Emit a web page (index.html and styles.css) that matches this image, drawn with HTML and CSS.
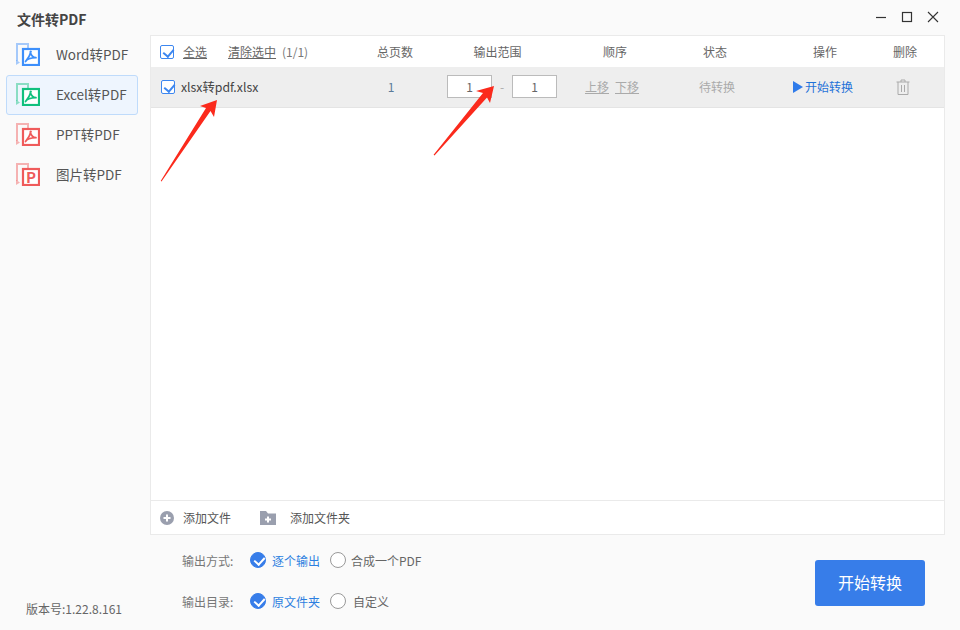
FILE: index.html
```html
<!DOCTYPE html>
<html lang="zh-CN">
<head>
  <meta charset="UTF-8">
  <title>文件转PDF</title>
  <link rel="stylesheet" href="styles.css">
</head>
<body>
  <svg class="defs" width="0" height="0">
    <symbol id="doc" viewBox="0 0 24 23">
      <path d="M1 18V1h11v4" fill="none" stroke="currentColor" stroke-opacity=".45" stroke-width="2"/>
      <path d="M0 17l4 2.500L0 22z" fill="currentColor" fill-opacity=".45"/>
      <rect x="7" y="6" width="16" height="16" fill="#fff" stroke="currentColor" stroke-width="2.200"/>
    </symbol>
    <symbol id="swirl" viewBox="0 0 24 23">
      <path d="M15 8.500c-.8 3-2.800 7-5.500 10 1-1.800 4-3.500 10.500-3.800-3.200-.2-5-3-5.700-5.500-.2-.8.5-1 .7-.7z" fill="none" stroke="currentColor" stroke-width="1.700" stroke-linejoin="round"/>
    </symbol>
  </svg>

  <header class="titlebar">
    <h1 class="app-title">文件转PDF</h1>
    <div class="win-btns">
      <svg width="12" height="12" viewBox="0 0 12 12"><path d="M1 6.500h10" stroke="#333" stroke-width="1.200"/></svg>
      <svg width="12" height="12" viewBox="0 0 12 12"><rect x="1.500" y="1.500" width="9" height="9" fill="none" stroke="#333" stroke-width="1.200"/></svg>
      <svg width="12" height="12" viewBox="0 0 12 12"><path d="M1 1l10 10M11 1L1 11" stroke="#333" stroke-width="1.100"/></svg>
    </div>
  </header>

  <div class="main">
    <aside class="sidebar">
      <nav class="menu">
        <a class="menu-item blue">
          <svg class="menu-icon"><use href="#doc"/><use href="#swirl"/></svg>
          <span>Word转PDF</span>
        </a>
        <a class="menu-item green active">
          <svg class="menu-icon"><use href="#doc"/><use href="#swirl"/></svg>
          <span>Excel转PDF</span>
        </a>
        <a class="menu-item red">
          <svg class="menu-icon"><use href="#doc"/><use href="#swirl"/></svg>
          <span>PPT转PDF</span>
        </a>
        <a class="menu-item red">
          <svg class="menu-icon"><use href="#doc"/><text x="15" y="19.500" class="p-mark">P</text></svg>
          <span>图片转PDF</span>
        </a>
      </nav>
      <div class="version">版本号:1.22.8.161</div>
    </aside>

    <section class="content">
      <div class="panel">
        <div class="grid-row head">
          <div class="name-cell">
            <span class="check"></span>
            <a class="link select-all">全选</a>
            <a class="link">清除选中</a>
            <span class="count">(1/1)</span>
          </div>
          <div>总页数</div>
          <div>输出范围</div>
          <div>顺序</div>
          <div>状态</div>
          <div>操作</div>
          <div>删除</div>
        </div>

        <div class="grid-row file">
          <div class="name-cell">
            <span class="check"></span>
            <span class="file-name">xlsx转pdf.xlsx</span>
          </div>
          <div class="pages">1</div>
          <div class="range">
            <span class="num">1</span>
            <span class="dash">-</span>
            <span class="num">1</span>
          </div>
          <div class="order"><a>上移</a><a>下移</a></div>
          <div class="status">待转换</div>
          <div class="action">
            <svg width="10" height="12" viewBox="0 0 10 12"><path d="M0 0l10 6-10 6z" fill="#2f7bea"/></svg>
            <span>开始转换</span>
          </div>
          <div class="trash">
            <svg width="14" height="16" viewBox="0 0 14 16" fill="none" stroke="#aaa" stroke-width="1">
              <path d="M.5 3h13M5 3V1h4v2M2 3v12.500h10V3M5.500 6v7M8.500 6v7"/>
            </svg>
          </div>
        </div>

        <div class="list-space"></div>

        <div class="panel-foot">
          <a class="add-btn">
            <svg width="14" height="14" viewBox="0 0 14 14"><circle cx="7" cy="7" r="7" fill="#9a9fae"/><path d="M7 3.500v7M3.500 7h7" stroke="#fff" stroke-width="2"/></svg>
            <span>添加文件</span>
          </a>
          <a class="add-btn folder">
            <svg width="16" height="14" viewBox="0 0 16 14"><path d="M0 0h6l2 2.500h8V14H0z" fill="#9a9fae"/><path d="M8 5.500v6M5 8.500h6" stroke="#fff" stroke-width="2"/></svg>
            <span>添加文件夹</span>
          </a>
        </div>
      </div>

      <div class="bottom">
        <div class="options">
          <div class="opt-row">
            <span class="opt-label">输出方式:</span>
            <span class="radio on"></span>
            <span class="opt-text on">逐个输出</span>
            <span class="radio"></span>
            <span class="opt-text">合成一个PDF</span>
          </div>
          <div class="opt-row">
            <span class="opt-label">输出目录:</span>
            <span class="radio on"></span>
            <span class="opt-text on">原文件夹</span>
            <span class="radio"></span>
            <span class="opt-text custom">自定义</span>
          </div>
        </div>
        <button class="start-btn">开始转换</button>
      </div>
    </section>
  </div>

  <!-- red arrows drawn over the file row -->
  <svg class="arrows" width="960" height="630" viewBox="0 0 960 630">
    <path d="M217 100l-3 17-3.500-6-49 70.500-.8-.6 45.300-73-6-2z" fill="#fb2a1c"/>
    <path d="M494 86l-4 17-3-5.500-52.500 58-.9-.7L483 93l-7-2z" fill="#fb2a1c"/>
  </svg>
</body>
</html>
```

FILE: styles.css
```css
* {
  box-sizing: border-box;
}
html, body {
  margin: 0;
  height: 630px;
  overflow: hidden;
}
body {
  position: relative;
  background: #fafafa;
  color: #555;
  font-family: "Noto Sans CJK SC", "Noto Sans", sans-serif;
  font-size: 12px;
}
a {
  cursor: pointer;
}
.defs {
  position: absolute;
}

/* title bar */
.titlebar {
  height: 35px;
  display: flex;
  align-items: center;
  justify-content: space-between;
  padding: 3px 21px 0 17px;
}
.app-title {
  margin: 0;
  font-size: 14px;
  font-weight: 700;
  color: #444;
}
.win-btns {
  display: flex;
  gap: 14px;
  margin-top: -4px;
}
.win-btns svg {
  display: block;
}

/* left menu */
.main {
  display: flex;
  height: 595px;
}
.sidebar {
  width: 150px;
  display: flex;
  flex-direction: column;
  padding-left: 6px;
}
.menu-item {
  width: 132px;
  height: 40px;
  display: flex;
  align-items: center;
  gap: 16px;
  padding: 0 0 2px 9px;
  border: 1px solid transparent;
  border-radius: 3px;
  font-size: 13.500px;
  color: #555;
}
.menu-item.active {
  background: #eef5fe;
  border-color: #bfdbfb;
}
.menu-icon {
  width: 24px;
  height: 23px;
  flex: none;
}
.blue .menu-icon { color: #3d8ffb; }
.green .menu-icon { color: #10c07e; }
.red .menu-icon { color: #ef5b5b; }
.p-mark {
  font-size: 15px;
  font-weight: 700;
  text-anchor: middle;
  fill: currentColor;
}
.version {
  margin-top: auto;
  padding: 0 0 13px 20px;
  font-size: 12px;
  color: #666;
}

/* file list */
.content {
  width: 795px;
}
.panel {
  height: 500px;
  display: flex;
  flex-direction: column;
  background: #fff;
  border: 1px solid #eaeaea;
}
.grid-row {
  display: grid;
  grid-template-columns: 204px 80px 125px 110px 90px 130px 30px;
  align-items: center;
  text-align: center;
  flex: none;
}
.grid-row.head {
  height: 32px;
  border-bottom: 1px solid #eee;
  color: #666;
}
.grid-row.file {
  height: 40px;
  padding-bottom: 2px;
  background: #eee;
  border-bottom: 1px solid #e4e4e4;
}
.name-cell {
  display: flex;
  align-items: center;
  text-align: left;
  padding-left: 9px;
}
.check {
  position: relative;
  width: 14px;
  height: 14px;
  flex: none;
  background: #fff;
  border: 1px solid #3d87f0;
  border-radius: 2px;
}
.check::after {
  content: "";
  position: absolute;
  left: 3.500px;
  top: 1px;
  width: 5px;
  height: 8px;
  border: solid #3d87f0;
  border-width: 0 2px 2px 0;
  transform: rotate(40deg);
}
.file .name-cell {
  padding-left: 10px;
}
.link {
  text-decoration: underline;
  color: #666;
}
.select-all {
  margin: 0 21px 0 9px;
}
.count {
  margin-left: 6px;
  color: #777;
}
.file-name {
  margin-left: 6px;
  font-size: 12.300px;
  color: #444;
}
.pages {
  padding-right: 8px;
  color: #5b7a99;
}
.range {
  display: flex;
  align-items: center;
  padding-left: 12px;
}
.num {
  width: 45px;
  height: 23px;
  line-height: 21px;
  background: #fff;
  border: 1px solid #bbb;
  color: #666;
}
.dash {
  width: 20px;
  color: #aaa;
}
.order {
  display: flex;
  justify-content: center;
  gap: 6px;
  padding-right: 6px;
}
.order a {
  text-decoration: underline;
  color: #aaa;
}
.status {
  padding-left: 4px;
  color: #aaa;
}
.action {
  display: flex;
  align-items: center;
  justify-content: center;
  gap: 2px;
  padding-right: 4px;
  color: #1f72d8;
}
.trash {
  display: flex;
  justify-content: center;
  padding-right: 4px;
}
.list-space {
  flex: 1;
}
.panel-foot {
  height: 34px;
  flex: none;
  display: flex;
  align-items: center;
  padding-left: 9px;
  border-top: 1px solid #eaeaea;
  color: #555;
}
.add-btn {
  display: flex;
  align-items: center;
  gap: 9px;
}
.add-btn.folder {
  margin-left: 29px;
  gap: 14px;
}

/* output options and start button */
.bottom {
  display: flex;
  justify-content: space-between;
  padding: 15px 20px 0 32px;
}
.options {
  display: flex;
  flex-direction: column;
  gap: 21px;
}
.opt-row {
  height: 20px;
  display: flex;
  align-items: center;
}
.opt-label {
  width: 68px;
  flex: none;
  color: #777;
}
.radio {
  position: relative;
  width: 16px;
  height: 16px;
  flex: none;
  background: #fff;
  border: 1px solid #999;
  border-radius: 50%;
}
.radio.on {
  background: #377de9;
  border-color: #377de9;
}
.radio.on::after {
  content: "";
  position: absolute;
  left: 5px;
  top: 2px;
  width: 5px;
  height: 8px;
  border: solid #fff;
  border-width: 0 2px 2px 0;
  transform: rotate(42deg);
}
.opt-text {
  margin: 0 10px 0 5px;
  color: #666;
}
.opt-text.on {
  margin-left: 6px;
  color: #2d7fe0;
}
.opt-text.custom {
  margin-left: 7px;
}
.start-btn {
  width: 110px;
  height: 46px;
  margin-top: 10px;
  padding: 0 0 2px;
  border: none;
  border-radius: 3px;
  background: #377de9;
  color: #fff;
  font-family: inherit;
  font-size: 16px;
}

.arrows {
  position: absolute;
  left: 0;
  top: 0;
  pointer-events: none;
}
```
